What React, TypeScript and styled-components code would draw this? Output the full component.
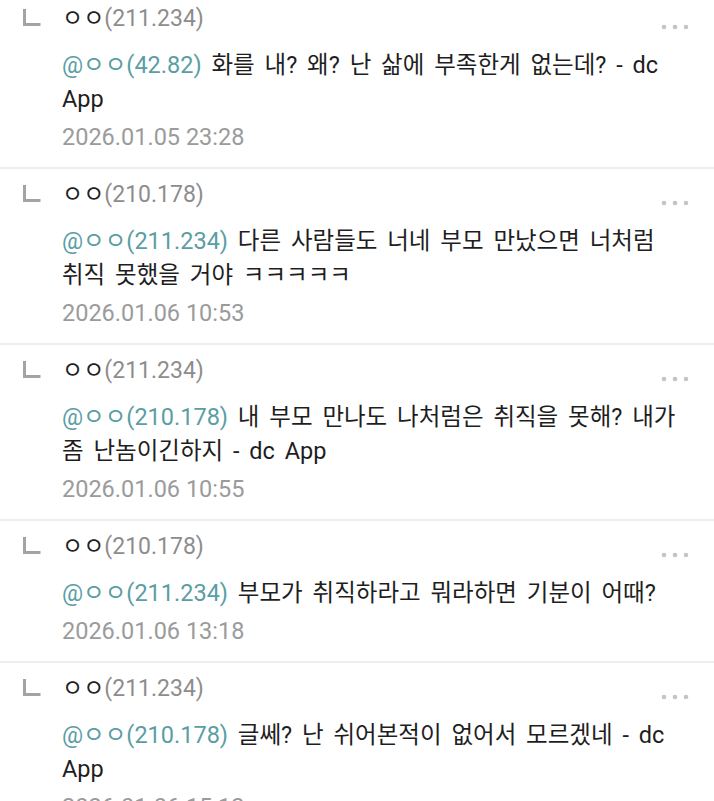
import React from "react";
import styled, { createGlobalStyle } from "styled-components";

const GlobalStyle = createGlobalStyle`
    html, body {
        margin: 0;
        padding: 0;
        background: #ffffff;
    }
    body {
        font-family: Roboto, "Noto Sans CJK KR", sans-serif;
        overflow: hidden;
    }
`;

const List = styled.div`
    margin-top: -7px;
    display: flex;
    flex-direction: column;
`;

const Comment = styled.div`
    display: grid;
    grid-template-columns: 62px 1fr;
    padding: 11px 0 13px;
    border-bottom: 2px solid #eeeeee;
`;

const ReplyMark = styled.div`
    padding: 4px 0 0 22px;
`;

const Content = styled.div`
    display: flex;
    flex-direction: column;
    padding-right: 22px;
    min-width: 0;
`;

const Header = styled.div`
    display: flex;
    align-items: center;
    justify-content: space-between;
    height: 30px;
`;

const Name = styled.span`
    font-size: 23px;
    line-height: 30px;
    color: #222222;
`;

const Ip = styled.span`
    color: #8d8d8d;
`;

const MoreButton = styled.div`
    display: flex;
    align-items: center;
    margin: 16px 2px 0 0;
`;

const Body = styled.div`
    margin-top: 14px;
    font-size: 23.5px;
    line-height: 34px;
    word-spacing: 4px;
    color: #1e1e1e;
    word-break: keep-all;
`;

const Mention = styled.span`
    color: #5a9ea4;
`;

const Date = styled.div`
    margin-top: 4px;
    font-size: 23.5px;
    line-height: 34px;
    color: #9b9b9b;
`;

type Reply = {
    nick: string;
    ip: string;
    to: string;
    text: string;
    date: string;
};

const replies: Reply[] = [
    { nick: "ㅇㅇ", ip: "211.234", to: "ㅇㅇ(42.82)", text: "화를 내? 왜? 난 삶에 부족한게 없는데? - dc App", date: "2026.01.05 23:28" },
    { nick: "ㅇㅇ", ip: "210.178", to: "ㅇㅇ(211.234)", text: "다른 사람들도 너네 부모 만났으면 너처럼 취직 못했을 거야 ㅋㅋㅋㅋㅋ", date: "2026.01.06 10:53" },
    { nick: "ㅇㅇ", ip: "211.234", to: "ㅇㅇ(210.178)", text: "내 부모 만나도 나처럼은 취직을 못해? 내가 좀 난놈이긴하지 - dc App", date: "2026.01.06 10:55" },
    { nick: "ㅇㅇ", ip: "210.178", to: "ㅇㅇ(211.234)", text: "부모가 취직하라고 뭐라하면 기분이 어때?", date: "2026.01.06 13:18" },
    { nick: "ㅇㅇ", ip: "211.234", to: "ㅇㅇ(210.178)", text: "글쎄? 난 쉬어본적이 없어서 모르겠네 - dc App", date: "2026.01.06 15:12" },
];

const CornerIcon = () => (
    <svg width="19" height="19" viewBox="0 0 19 19">
        <path d="M2.5 1 V16.5 H18.5" fill="none" stroke="#a3a3a3" strokeWidth="3" />
    </svg>
);

const DotsIcon = () => (
    <svg width="30" height="8" viewBox="0 0 30 8">
        <circle cx="4" cy="4" r="2.3" fill="#c4c4c4" />
        <circle cx="15" cy="4" r="2.3" fill="#c4c4c4" />
        <circle cx="26" cy="4" r="2.3" fill="#c4c4c4" />
    </svg>
);

const ReplyItem = (props: { reply: Reply }) => {
    const r = props.reply;
    return (
        <Comment>
            <ReplyMark>
                <CornerIcon />
            </ReplyMark>
            <Content>
                <Header>
                    <Name>
                        {r.nick}
                        <Ip>({r.ip})</Ip>
                    </Name>
                    <MoreButton>
                        <DotsIcon />
                    </MoreButton>
                </Header>
                <Body>
                    <Mention>@{r.to}</Mention> {r.text}
                </Body>
                <Date>{r.date}</Date>
            </Content>
        </Comment>
    );
};

export default function App() {
    return (
        <>
            <GlobalStyle />
            <List>
                {replies.map((r, i) => (
                    <ReplyItem key={i} reply={r} />
                ))}
            </List>
        </>
    );
}
